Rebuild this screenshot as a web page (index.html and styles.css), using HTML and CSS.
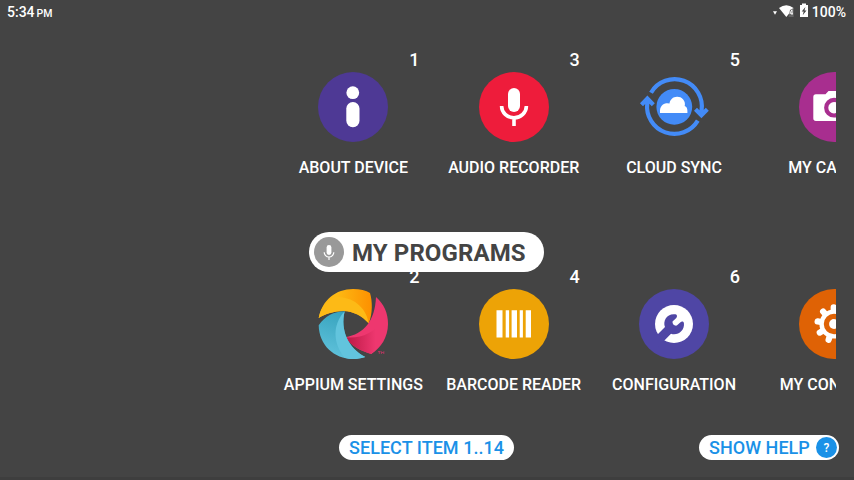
FILE: index.html
```html
<!DOCTYPE html>
<html lang="en">
<head>
<meta charset="utf-8">
<title>My Programs</title>
<link rel="stylesheet" href="styles.css">
</head>
<body>
<header class="status">
  <div class="clock"><span>5:34</span><span class="pm">PM</span></div>
  <div class="indicators">
    <svg width="36" height="16" viewBox="0 0 36 16" fill="#fff"><path d="M0 8.2h4L2 11.8z"/><path d="M6 5Q13.300 -.4 20.600 5L13.300 14z"/><path d="M20.600 5V14H15.500l1.500-7z" fill="#666"/><path d="M19 12V6.800l-2.200 3.500H20" stroke="#fff" fill="none" stroke-width=".9"/><path d="M29 2V.6h4V2h2v12h-8V2z"/><path d="M32.400 4l-3.700 4.600h2l-1 3.600 3.800-4.800h-2z" fill="#444"/></svg>
    <span class="battery">100%</span>
  </div>
</header>
<main class="grid">
  <section class="tile"><span class="number">1</span>
    <svg class="icon" viewBox="0 0 70 70"><circle cx="35" cy="35" r="35" fill="#4e3995"/><circle cx="34.8" cy="20.7" r="6.4" fill="#fff"/><rect x="28.3" y="30" width="13.2" height="25.2" rx="6.5" fill="#fff"/></svg>
    <span class="label">ABOUT DEVICE</span></section>
  <section class="tile"><span class="number">2</span>
    <svg class="icon" viewBox="0 0 70 70">
      <defs>
        <linearGradient id="amber"><stop offset=".35" stop-color="#fdb913"/><stop offset="1" stop-color="#fd9000"/></linearGradient>
        <linearGradient id="rose"><stop stop-color="#b91844"/><stop offset=".8" stop-color="#ee376f"/></linearGradient>
        <linearGradient id="teal" x1=".5" y1="0" x2=".2" y2="1"><stop stop-color="#36a2bd"/><stop offset="1" stop-color="#62c4dd"/></linearGradient>
      </defs>
      <path d="M.7 29C4 11 18 0 35 0c7 0 13 1.500 17 4 2.500 8 2.800 21-1.300 30.300C44 27 36 22.500 25.300 22 16 22 7 25 .7 29z" fill="url(#amber)"/>
      <path d="M.7 29C3 18 10 10 17 8c15-1 31 8 33.700 26.300C44 27 36 22.500 25.300 22 16 22 7 25 .7 29z" fill="#fdba16"/>
      <path d="M58 8c8 7 12 16 12 27 0 13-7 24-16.700 30C43 62 33 57 27.300 48.300 46 45 57 32 58 8z" fill="#ee376f"/>
      <path d="M27.300 48.300C43 50 55 44 65 32c-1 14-5 26-11.700 33C43 62 33 57 27.300 48.300z" fill="url(#rose)"/>
      <path d="M.7 36.300C7 27 16 22.500 26.700 22.300 22 41 30 59 47.300 68 42 69.500 39 70 35 70 16 70 1 56 .7 36.300z" fill="url(#teal)"/>
      <path d="M26.700 22.300C22 41 30 59 47.300 68 42 69.500 39 70 35 70c-3 0-6-.4-8.500-1.200C15 54 14 36 26.700 22.300z" fill="#62c4dd"/>
      <path d="M60 62.600h2.600M61.300 62.600v2.300M63.400 65v-2.400l1.200 1.400 1.200-1.400V65" fill="none" stroke="#d83469" stroke-width=".7"/>
    </svg>
    <span class="label">APPIUM SETTINGS</span></section>
  <section class="tile"><span class="number">3</span>
    <svg class="icon" viewBox="0 0 70 70"><circle cx="35" cy="35" r="35" fill="#ee1c3b"/><rect x="29" y="16" width="12" height="24" rx="6" fill="#fff"/><path d="M22.600 34a12.400 11.800 0 0 0 24.800 0M35 46v8" fill="none" stroke="#fff" stroke-width="3.600"/></svg>
    <span class="label">AUDIO RECORDER</span></section>
  <section class="tile"><span class="number">4</span>
    <svg class="icon" viewBox="0 0 70 70"><circle cx="35" cy="35" r="35" fill="#eda306"/><path d="M17.500 21.300h6v27.200h-6zM26.700 21.300h3.400v27.200h-3.400zM32.600 21.300h5.400v27.200h-5.400zM40.700 21.300h3.200v27.200h-3.200zM46.700 21.300H52v27.200h-5.300z" fill="#fff"/></svg>
    <span class="label">BARCODE READER</span></section>
  <section class="tile"><span class="number">5</span>
    <svg class="icon" viewBox="0 0 70 70"><circle cx="35.300" cy="34.800" r="17.900" fill="#438bf7"/><path d="M12 20.700A27.300 27.300 0 0 1 62.500 39v4M56.500 37.300l5.900 6 5.900-6M58.800 48.600A27.300 27.300 0 0 1 8.300 31v-4M2.500 32.700l5.900-6.200 5.900 6.200" fill="none" stroke="#438bf7" stroke-width="4.200"/><path d="M21 41v-2.500a7.300 7.300 0 0 1 9.500-7c.5-4 3.500-6.800 7.500-6.800a7.500 7.500 0 0 1 7.700 9.300c2 .8 2.700 2.600 2.700 4.800V41z" fill="#fff"/></svg>
    <span class="label">CLOUD SYNC</span></section>
  <section class="tile"><span class="number">6</span>
    <svg class="icon" viewBox="0 0 70 70"><circle cx="35" cy="35" r="35" fill="#4f46a5"/><circle cx="35" cy="35" r="19" fill="#fff"/><path d="M36.500 25.300C28 24 23.500 32 26 38L13 51l6.500 6.500L32 44.800c6.500 2.200 14-3 12.900-10.800-.5-1.700-2.200-1.900-3.400-.8l-3.700 3.400c-2.600.5-4.600-1.500-4.300-4l3.800-3.700c1.200-1.300.9-3.200-.8-3.600z" fill="#4f46a5"/></svg>
    <span class="label">CONFIGURATION</span></section>
  <section class="tile"><span class="number"></span>
    <svg class="icon" viewBox="0 0 70 70"><circle cx="35" cy="35" r="35" fill="#a82e8f"/><path d="M17 22.300h9.500l3-3.300h11l3 3.300H53a2.700 2.700 0 0 1 2.700 2.700v21.300A2.700 2.700 0 0 1 53 49H17a2.700 2.700 0 0 1-2.700-2.700V25a2.700 2.700 0 0 1 2.700-2.700z" fill="#fff"/><circle cx="35" cy="35.700" r="7.800" fill="#fff" stroke="#a82e8f" stroke-width="4.200"/></svg>
    <span class="label">MY CAMERA</span></section>
  <section class="tile"><span class="number"></span>
    <svg class="icon" viewBox="0 0 70 70"><circle cx="35" cy="35" r="35" fill="#df6205"/>
      <g stroke="#fff" stroke-width="6.200" stroke-linecap="round"><path id="tooth" d="M35 22v-3.600" transform="rotate(-1 35 35)"/><use href="#tooth" transform="rotate(40 35 35)"/><use href="#tooth" transform="rotate(80 35 35)"/><use href="#tooth" transform="rotate(120 35 35)"/><use href="#tooth" transform="rotate(160 35 35)"/><use href="#tooth" transform="rotate(200 35 35)"/><use href="#tooth" transform="rotate(240 35 35)"/><use href="#tooth" transform="rotate(280 35 35)"/><use href="#tooth" transform="rotate(320 35 35)"/></g>
      <circle cx="35" cy="35" r="12.400" fill="#df6205" stroke="#fff" stroke-width="4.400"/><circle cx="35" cy="35" r="4.900" fill="#fff"/></svg>
    <span class="label">MY CONTROLS</span></section>
</main>
<div class="title"><svg width="30" height="30" viewBox="0 0 30 30"><circle cx="15" cy="15" r="15" fill="#999"/><rect x="12.600" y="8" width="4.800" height="10" rx="2.400" fill="#fff"/><path d="M10.200 15.200a4.800 4.800 0 0 0 9.600 0M15 20v3" fill="none" stroke="#fff" stroke-width="1.200"/></svg><span class="title-text">MY PROGRAMS</span></div>
<footer class="commands">
  <div class="pill select">SELECT ITEM 1..14</div>
  <div class="pill help"><span>SHOW HELP</span><span class="question">?</span></div>
</footer>
<div class="edge"></div>
</body>
</html>
```
FILE: styles.css
```css
* { box-sizing: border-box; }
body {
  margin: 0;
  width: 854px;
  height: 480px;
  overflow: hidden;
  position: relative;
  display: flex;
  flex-direction: column;
  background: #444;
  color: #fff;
  font-family: Roboto, sans-serif;
  font-weight: 500;
}
.status {
  height: 24px;
  flex: none;
  padding: 0 8px 0 7px;
  display: flex;
  justify-content: space-between;
  font-size: 14px;
  line-height: 24px;
}
.clock { display: flex; gap: 2px; align-items: baseline; }
.pm { font-size: 10.5px; }
.indicators { display: flex; gap: 3px; }
.indicators svg { margin-top: 3px; }
.grid {
  margin: 24px 18px 0 273.2px;
  height: 387px;
  flex: none;
  display: grid;
  grid-auto-flow: column;
  grid-template-rows: 217px 170px;
  grid-auto-columns: 160.35px;
  overflow: hidden;
}
.tile { display: flex; flex-direction: column; align-items: center; }
.number {
  align-self: flex-end;
  width: 10px;
  margin-right: 14.4px;
  height: 24px;
  font-size: 18px;
  line-height: 24px;
}
.icon { width: 70px; height: 70px; flex: none; }
.label { margin-top: 15px; font-size: 16px; line-height: 22px; white-space: nowrap; }
.title {
  position: absolute;
  left: 309px;
  top: 232px;
  width: 235px;
  height: 40px;
  border-radius: 20px;
  padding-left: 5px;
  display: flex;
  align-items: center;
  gap: 8px;
  background: #fff;
  color: #444;
  font-size: 24px;
  font-weight: 700;
  letter-spacing: .1px;
  white-space: nowrap;
}
.title-text { padding-top: 2px; }
.commands { display: flex; justify-content: space-between; padding: 0 15px 0 339px; }
.pill {
  height: 25px;
  border-radius: 13px;
  background: #fff;
  color: #1a91e7;
  font-size: 18px;
  line-height: 26px;
  letter-spacing: .04px;
  white-space: nowrap;
}
.select { width: 175px; padding-left: 10px; }
.help { width: 140px; padding: 0 2px 0 10px; display: flex; align-items: center; justify-content: space-between; }
.question {
  width: 21px;
  height: 21px;
  border-radius: 50%;
  background: #1a91e7;
  color: #fff;
  text-align: center;
  font-size: 12px;
  line-height: 22px;
}
.edge { margin-top: auto; height: 3px; background: #3e3e3e; }
```
